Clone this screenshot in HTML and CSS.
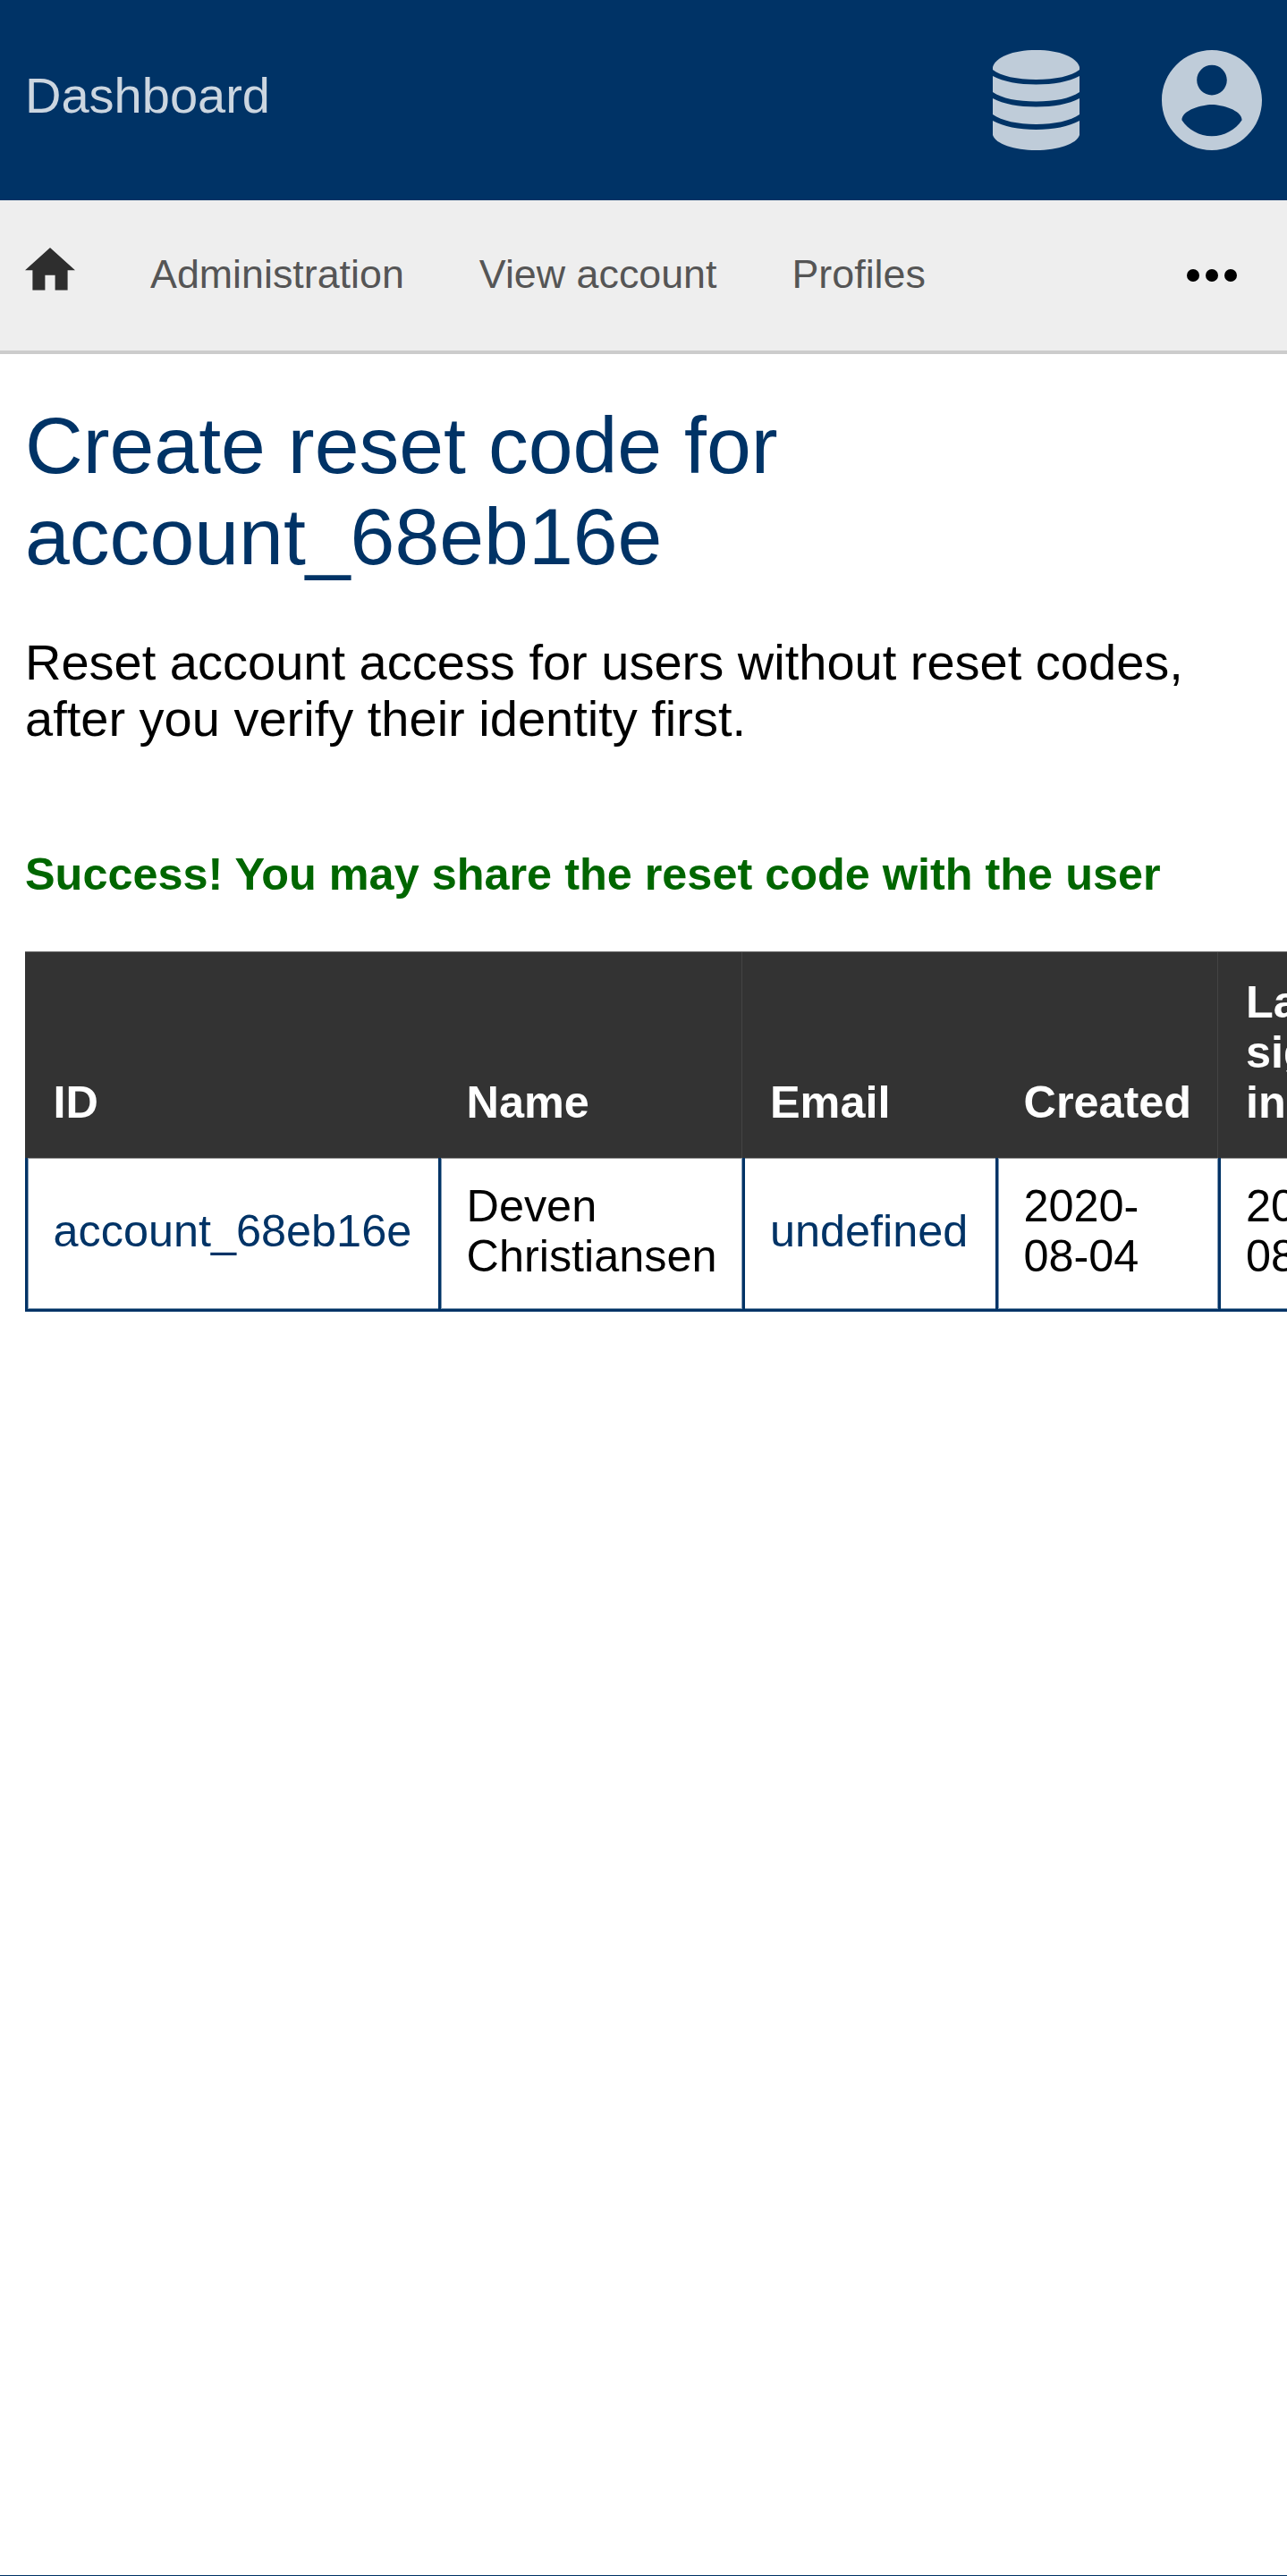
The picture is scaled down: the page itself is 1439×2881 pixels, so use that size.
FILE: index.html
```html
<!DOCTYPE html>
<html lang="en">
<head>
<meta charset="utf-8">
<title>Dashboard</title>
<link rel="stylesheet" href="styles.css">
</head>
<body>
<header class="topbar">
  <a class="brand">Dashboard</a>
  <div class="tools">
    <svg class="icon-db" viewBox="0 0 97 112">
      <path d="M0 19C3 8 22 0 48.500 0S94 8 97 19V22C88 29 70 33 48.500 33S9 29 0 22Z"/>
      <path d="M0 29C12 35.500 29 38.500 48.500 38.500S85 35.500 97 29V47C87 54 69 57.500 48.500 57.500S10 54 0 47Z"/>
      <path d="M0 54C12 60.500 29 63.500 48.500 63.500S85 60.500 97 54V72C87 79 69 83 48.500 83S10 79 0 72Z"/>
      <path d="M0 79C12 85.500 29 89 48.500 89S85 85.500 97 79V95C94 105 73 112 48.500 112S3 105 0 95Z"/>
    </svg>
    <svg class="icon-user" viewBox="2 2 20 20">
      <path d="M12 2C6.480 2 2 6.480 2 12s4.480 10 10 10 10-4.480 10-10S17.520 2 12 2zm0 3c1.660 0 3 1.340 3 3s-1.340 3-3 3-3-1.340-3-3 1.340-3 3-3zm0 14.200c-2.500 0-4.710-1.280-6-3.220.030-1.990 4-3.080 6-3.080 1.990 0 5.970 1.090 6 3.080-1.290 1.940-3.500 3.220-6 3.220z"/>
    </svg>
  </div>
</header>
<nav class="navbar">
  <svg class="icon-home" viewBox="2 3 20 17"><path d="M10 20v-6h4v6h5v-8h3L12 3 2 12h3v8z"/></svg>
  <a>Administration</a>
  <a>View account</a>
  <a>Profiles</a>
  <svg class="icon-more" viewBox="0 0 56 14"><circle cx="7" cy="7" r="7"/><circle cx="28" cy="7" r="7"/><circle cx="49" cy="7" r="7"/></svg>
</nav>
<main class="content">
  <h1>Create reset code for account_68eb16e</h1>
  <p class="intro">Reset account access for users without reset codes, after you verify their identity first.</p>
  <p class="success">Success! You may share the reset code with the user</p>
  <table class="accounts">
    <colgroup><col class="c-id"><col class="c-name"><col class="c-email"><col class="c-created"><col class="c-last"></colgroup>
    <thead>
      <tr><th>ID</th><th>Name</th><th>Email</th><th>Created</th><th>Last sign in</th></tr>
    </thead>
    <tbody>
      <tr><td><a>account_68eb16e</a></td><td>Deven Christiansen</td><td><a>undefined</a></td><td>2020-08-04</td><td>2020-08-04</td></tr>
    </tbody>
  </table>
</main>
<footer class="footer"></footer>
</body>
</html>
```

FILE: styles.css
```css
* { box-sizing: border-box; }

body {
  margin: 0;
  height: 2881px;
  overflow: hidden;
  display: flex;
  flex-direction: column;
  background: #fff;
  color: #000;
  font-family: "Liberation Sans", Arial, sans-serif;
  font-size: 56px;
  line-height: 63px;
}

svg { display: block; flex: none; }

.topbar {
  height: 224px;
  flex: none;
  padding: 0 28px;
  display: flex;
  align-items: center;
  justify-content: space-between;
  background: #003366;
}
.brand { color: #ccd6e0; padding-bottom: 11px; }
.tools { display: flex; gap: 92px; fill: #bfccd9; }
.icon-db { width: 97px; height: 112px; }
.icon-user { width: 112px; height: 112px; }

.navbar {
  height: 172px;
  flex: none;
  padding: 0 56px 4px 28px;
  display: flex;
  align-items: center;
  gap: 84px;
  background: #eee;
  border-bottom: 4px solid #ccc;
  color: #555;
  font-size: 44.8px;
  line-height: 52px;
}
.icon-home { width: 56px; height: 47.6px; margin-bottom: 10px; fill: #2e2e2e; }
.icon-more { width: 56px; height: 14px; margin: 4px 0 0 auto; fill: #000; }

.content { flex: 1; padding: 51px 28px 0; }

h1 {
  margin: 0 0 58px;
  color: #003366;
  font-size: 89.6px;
  font-weight: 400;
  line-height: 102px;
}
.intro { margin: 0 0 115px; }
.success {
  margin: 0 0 58px;
  color: #006600;
  font-size: 50.4px;
  font-weight: 700;
  line-height: 56px;
}

.accounts {
  width: 1530px;
  table-layout: fixed;
  border-spacing: 0;
  font-size: 50.4px;
  line-height: 56px;
}
.c-id { width: 462px; }
.c-name { width: 340px; }
.c-email { width: 283px; }
.c-created { width: 249px; }
.c-last { width: 196px; }
th {
  height: 231px;
  padding: 28px 20px 34px 31.5px;
  background: #333;
  box-shadow: inset 0 1px #666;
  color: #fff;
  font-weight: 700;
  text-align: left;
  vertical-align: bottom;
}
th:nth-child(even) { box-shadow: inset 0 1px #666, inset -1px 0 #444; }
td {
  height: 172px;
  padding: 26px 20px 31px 28.5px;
  border-left: 3px solid #003366;
  border-bottom: 3px solid #003366;
  box-shadow: inset 0 -1px #8099b3, inset 0 1px #999, inset 1px 0 #8099b3;
  vertical-align: middle;
}
td:nth-child(even) {
  box-shadow: inset 0 -1px #8099b3, inset 0 1px #999, inset 1px 0 #8099b3, inset -1px 0 #8099b3;
}
td:nth-child(3), td:nth-child(5) {
  padding-left: 28px;
  box-shadow: inset 0 -1px #8099b3, inset 0 1px #999;
}
th:nth-child(3), th:nth-child(5) { padding-left: 31px; }
td:nth-child(2) { padding-right: 12px; }
td a { color: #003366; }

.footer { height: 1px; flex: none; background: #003366; }
```
